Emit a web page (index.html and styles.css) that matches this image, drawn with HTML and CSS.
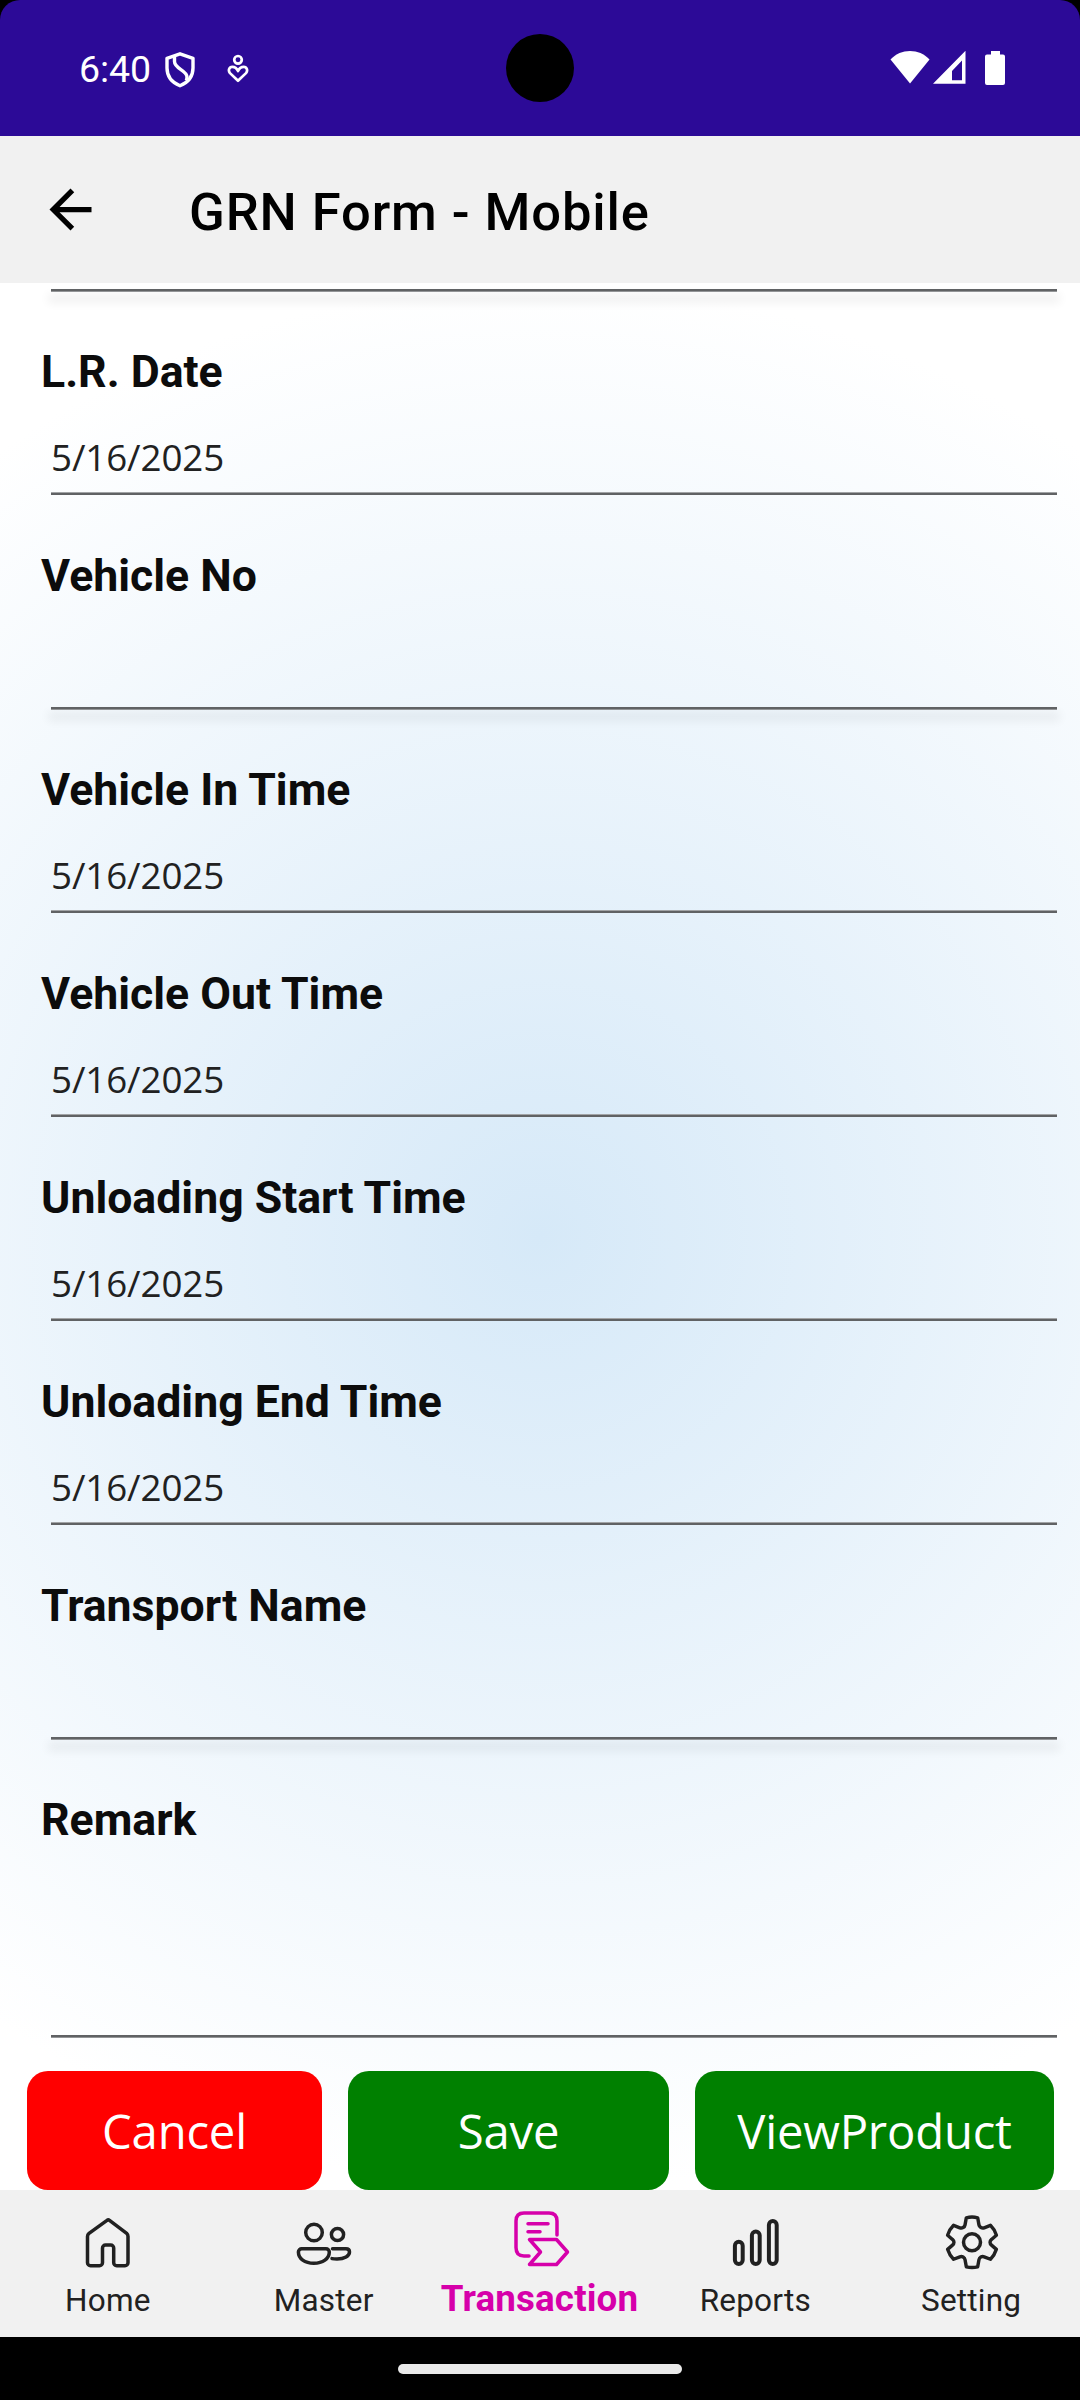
FILE: index.html
```html
<!DOCTYPE html>
<html lang="en">
<head>
<meta charset="utf-8">
<title>GRN Form - Mobile</title>
<link rel="stylesheet" href="styles.css">
</head>
<body>
<div class="screen">
  <div class="status-wrap">
    <div class="status">
      <span class="clock">6:40</span>
      <svg class="shield" width="30" height="36" viewBox="0 0 30 36" fill="none" stroke="#fff" stroke-width="3.4" stroke-linejoin="round"><path d="M15 1.800 28 6.300V16c0 8-5 14.500-13 17.800C7 30.500 2 24 2 16V6.300z"/><path d="M9.500 4.500v5c0 7.500 12.500 8.500 12.500 15.500 0 1.500-.3 2.500-.8 3.500"/></svg>
      <svg class="care" width="22" height="29" viewBox="0 0 22 29" fill="none" stroke="#fff" stroke-width="2.700" stroke-linejoin="round"><circle cx="11" cy="5.800" r="3.800"/><path d="M11 26.800 3 19.100c-2.200-2.600-.8-6.300 2.300-6.300 2.200 0 4.500 1.500 5.700 4.200 1.200-2.700 3.500-4.200 5.700-4.200 3.100 0 4.500 3.700 2.300 6.300z"/></svg>
      <span class="camera"></span>
      <svg class="wifi" width="40" height="34" viewBox="0 0 40 34" fill="#fff"><path d="M20 33.500 .5 9.500C6 3.800 12.500 1 20 1s14 2.800 19.500 8.500z"/></svg>
      <svg class="signal" width="33" height="34" viewBox="0 0 33 34"><path fill="#fff" fill-rule="evenodd" d="M0 33.800 32.500.8v33zM19 21v9.300h10V10.500z"/></svg>
      <svg class="battery" width="20" height="35" viewBox="0 0 20 35" fill="#fff"><path d="M6 1h9v3.500h3a2 2 0 0 1 2 2V33a2 2 0 0 1-2 2H2a2 2 0 0 1-2-2V6.500a2 2 0 0 1 2-2h4z"/></svg>
    </div>
  </div>
  <header class="appbar">
    <svg class="back" width="63" height="63" viewBox="0 0 24 24"><path d="M20 11H7.830l5.590-5.590L12 4l-8 8 8 8 1.410-1.410L7.830 13H20z"/></svg>
    <h1>GRN Form - Mobile</h1>
  </header>
  <main class="form">
    <div class="line shaded first"></div>
    <div class="field date after-text"><label>L.R. Date</label><span class="value">5/16/2025</span><div class="line"></div></div>
    <div class="field text"><label>Vehicle No</label><div class="line shaded"></div></div>
    <div class="field date after-text"><label>Vehicle In Time</label><span class="value">5/16/2025</span><div class="line"></div></div>
    <div class="field date"><label>Vehicle Out Time</label><span class="value">5/16/2025</span><div class="line"></div></div>
    <div class="field date"><label>Unloading Start Time</label><span class="value">5/16/2025</span><div class="line"></div></div>
    <div class="field date"><label>Unloading End Time</label><span class="value">5/16/2025</span><div class="line"></div></div>
    <div class="field text"><label>Transport Name</label><div class="line shaded"></div></div>
    <div class="field area after-text"><label>Remark</label><div class="line"></div></div>
    <div class="actions">
      <button class="btn cancel">Cancel</button>
      <button class="btn save">Save</button>
      <button class="btn view">ViewProduct</button>
    </div>
  </main>
  <nav class="tabs">
    <a class="tab"><svg width="63" height="63" viewBox="0 0 63 63"><path d="M31 10.400c.9-.7 1.600-.7 2.500 0L50.700 23.400c1 .8 1.300 1.700 1.300 3V52.700a3 3 0 0 1-3 3h-8.300a3 3 0 0 1-3-3V38a3 3 0 0 0-3-3h-5.200a3 3 0 0 0-3 3V52.700a3 3 0 0 1-3 3H14.500a3 3 0 0 1-3-3V26.400c0-1.300.5-2.200 1.500-3z"/></svg><span>Home</span></a>
    <a class="tab"><svg width="63" height="63" viewBox="0 0 63 63"><circle cx="22" cy="22.500" r="8.300"/><circle cx="45.500" cy="24.500" r="6.100"/><path d="M9.700 38.700H34a3.300 3.300 0 0 1 3.300 3.300c0 6.700-6.500 11.300-15.500 11.300S6.400 48.700 6.400 42a3.300 3.300 0 0 1 3.300-3.300zM40.500 38.700h13.500c2.300 0 3.500 1.500 3.500 3.300 0 3.900-5 7-12.500 7-2 0-3.500-.1-5-.4"/></svg><span>Master</span></a>
    <a class="tab active"><svg width="63" height="63" viewBox="0 0 63 63"><path d="M49 31V17c0-5-2.500-8-8-8H16c-5.500 0-8 3-8 8v26.500c0 6 3 8.500 8 8.500h5M20 19.800h20M20 27.700h12M21.500 35.500h27L59.500 48l-11 12.500h-27L32.500 48z"/></svg><span>Transaction</span></a>
    <a class="tab"><svg class="bars" width="63" height="63" viewBox="0 0 63 63"><rect x="10.900" y="31.800" width="7.800" height="22.200" rx="3.900"/><rect x="27.900" y="21.400" width="7.800" height="32.600" rx="3.900"/><rect x="44.900" y="11" width="7.800" height="43" rx="3.900"/></svg><span>Reports</span></a>
    <a class="tab"><svg width="63" height="63" viewBox="0 0 63 63"><circle cx="32" cy="32.300" r="8.500"/><path transform="translate(32 32.300) scale(.98) translate(-31.600 -33.500)" d="M25.800 8.500c3.800-1 7.800-1 11.600 0l1.300 7.200c.4 2.400 3 3.900 5.300 3l6.400-2.500c3 2.900 4.900 6.200 6.100 10.100l-5 4.300c-2 1.600-2 4.200 0 5.800l5 4.300c-1.200 3.900-3.100 7.200-6.100 10.100L44 48.300c-2.300-.9-4.900.6-5.300 3l-1.300 7.200c-3.800 1-7.800 1-11.600 0l-1.300-7.200c-.4-2.400-3-3.900-5.300-3l-6.400 2.500c-3-2.900-4.900-6.200-6.100-10.100l5-4.300c2-1.600 2-4.200 0-5.800l-5-4.300c1.200-3.900 3.100-7.200 6.100-10.100l6.400 2.500c2.300.9 4.900-.6 5.300-3z"/></svg><span>Setting</span></a>
  </nav>
  <div class="gesture"><span></span></div>
</div>
</body>
</html>
```
FILE: styles.css
```css
* { box-sizing: border-box; }
body { margin: 0; background: #000; font-family: Roboto, sans-serif; }
.screen { width: 1080px; height: 2400px; display: flex; flex-direction: column; overflow: hidden; }

.status-wrap { background: #000; height: 136px; flex: none; }
.status { position: relative; height: 136px; background: #2c0a97; border-radius: 20px 20px 0 0; display: flex; align-items: flex-start; padding-left: 79px; color: #fff; }
.clock { font-size: 37.500px; line-height: 44px; margin-top: 47px; width: 86px; letter-spacing: -.1px; }
.shield { margin-top: 52px; }
.care { margin: 54px 0 0 32px; }
.camera { position: absolute; left: 506px; top: 34px; width: 68px; height: 68px; border-radius: 50%; background: #000; }
.wifi { margin: 50px 3px 0 auto; }
.signal { margin: 50px 19px 0 0; }
.battery { margin: 50px 75px 0 0; }

.appbar { height: 147px; flex: none; background: #f1f1f1; display: flex; align-items: center; padding: 0 0 1px 39px; }
.back { margin-right: 87px; }
.appbar h1 { margin: 0; padding-top: 5px; font-size: 52.500px; font-weight: 500; line-height: 62px; letter-spacing: .9px; }

.form { height: 1907px; flex: none; padding-top: 6px; display: flex; flex-direction: column; background: radial-gradient(circle 954px at 50% 50%, #d6e9f8, #fff); }
.field { display: flex; flex-direction: column; flex: none; }
.field label { margin: 55px 0 0 41px; height: 52px; line-height: 52px; font-size: 44.600px; font-weight: 700; color: #0c0c0c; }
.after-text label { margin-top: 54px; }
.value { margin: 34px 0 0 51px; height: 50px; line-height: 50px; font-family: "Open Sans", sans-serif; font-size: 36.750px; letter-spacing: -.1px; color: #212121; }
.line { margin: auto 23px 0 51px; height: 3px; flex: none; border-top: 1px solid #a2a4a6; background: #606264; }
.line.shaded, .area .line { border-top: 0; border-bottom: 1px solid #939597; }
.line.shaded { box-shadow: 0 8px 10px 3px rgba(0, 0, 0, .06); }
.line.first { margin-top: 0; }
.date { height: 204px; }
.date.after-text { height: 203px; }
.text { height: 215px; }
.area { height: 298px; }

.actions { display: flex; gap: 26px; margin: auto 26px 0 27px; }
.btn { height: 119px; border: 0; border-radius: 21px; padding: 0; color: #fff; font: 47.250px/64px "Open Sans", sans-serif; letter-spacing: -.2px; }
.cancel { width: 295px; background: #f00; }
.save { width: 321px; background: #008000; }
.view { width: 359px; background: #008000; }

.tabs { height: 147px; flex: none; background: #f1f1f1; display: grid; grid-template-columns: repeat(5, 1fr); padding-right: 1px; margin-right: 0; }
.tab { display: flex; flex-direction: column; align-items: center; padding-top: 20px; color: #212121; font-size: 31.500px; letter-spacing: .2px; }
.tab svg { fill: none; stroke: currentColor; stroke-width: 3.500; stroke-linejoin: round; stroke-linecap: round; }
.tab .bars { stroke-width: 4; }
.tab span { line-height: 38px; margin-top: 9px; }
.tab.active { color: #d600aa; font-weight: 700; padding-top: 14px; }
.tab.active span { font-size: 36.750px; line-height: 44px; margin-top: 10px; letter-spacing: .15px; }

.gesture { flex: 1; display: flex; justify-content: center; padding-top: 27px; }
.gesture span { width: 284px; height: 10px; border-radius: 5px; background: #eaeaea; }
```
